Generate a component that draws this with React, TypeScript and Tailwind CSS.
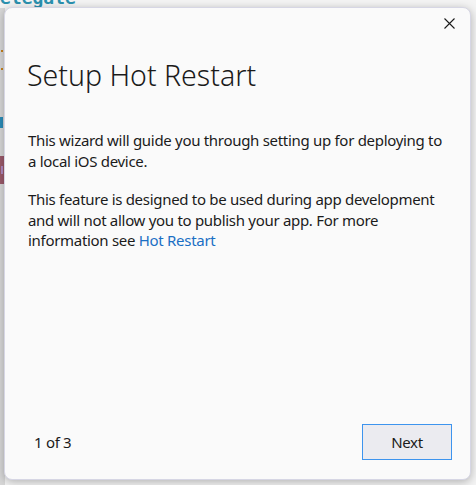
export default function App() {
  return (
    <div className="relative h-[485px] w-[476px] overflow-hidden bg-[#f4f4f4] font-['Noto_Sans','Open_Sans',sans-serif]">
      {/* editor behind the dialog */}
      <div className="flex h-full flex-col">
        <div className="-mt-[12px] font-['DejaVu_Sans_Mono',monospace] text-[18px] font-bold leading-[20px] text-[#2b91af]">
          elegate
        </div>
        <div className="flex w-[5px] flex-1 flex-col bg-[#d8d8d8]">
          <div className="ml-[1px] mt-[42px] h-[2px] w-[2px] bg-[#c8821c]" />
          <div className="ml-[1px] mt-[16px] h-[2px] w-[2px] bg-[#c8821c]" />
          <div className="mt-[47px] h-[11px] w-[3px] bg-[#2b8cb8]" />
          <div className="mt-[28px] flex h-[28px] w-[4px] items-center bg-[#9b5a6a]">
            <div className="ml-[1px] h-[8px] w-[2px] bg-[#b08ac0]" />
          </div>
        </div>
      </div>

      {/* dialog */}
      <div className="absolute left-[4px] top-[7px] flex h-[473px] w-[467px] flex-col rounded-[8px] border border-[#d6d6e4] bg-[#fafafa] shadow-[0_2px_10px_rgba(0,0,0,0.28)]">
        <div className="flex justify-end pr-[14px] pt-[8px]">
          <button className="flex h-[14px] w-[14px] items-center justify-center text-[#1b1b1b]">
            <svg width="11" height="11" viewBox="0 0 11 11" fill="none" stroke="currentColor" strokeWidth="1.1">
              <path d="M0.5 0.5 L10.5 10.5 M10.5 0.5 L0.5 10.5" />
            </svg>
          </button>
        </div>
        <h1 className="ml-[22px] mt-[27px] text-[28.5px] font-light leading-[36px] text-[#1b1b1b]">
          Setup Hot Restart
        </h1>
        <div className="ml-[23px] mr-[27px] mt-[37px] flex-1 text-[15px] leading-[20.5px] tracking-[-0.3px] text-[#1b1b1b]">
          <p>This wizard will guide you through setting up for deploying to a local iOS device.</p>
          <p className="mt-[18px]">
            This feature is designed to be used during app development and will not allow you to publish your app. For more information see{' '}
            <a className="text-[#1a6fc4]">Hot Restart</a>
          </p>
        </div>
        <div className="flex items-center justify-between pb-[19px] pl-[29px] pr-[18px]">
          <span className="text-[15px] tracking-[-0.3px] text-[#1b1b1b]">1 of 3</span>
          <button className="h-[36px] w-[90px] border border-[#3d94ee] bg-[#ebebf0] text-[15px] tracking-[-0.3px] text-[#1b1b1b]">
            Next
          </button>
        </div>
      </div>
    </div>
  )
}
